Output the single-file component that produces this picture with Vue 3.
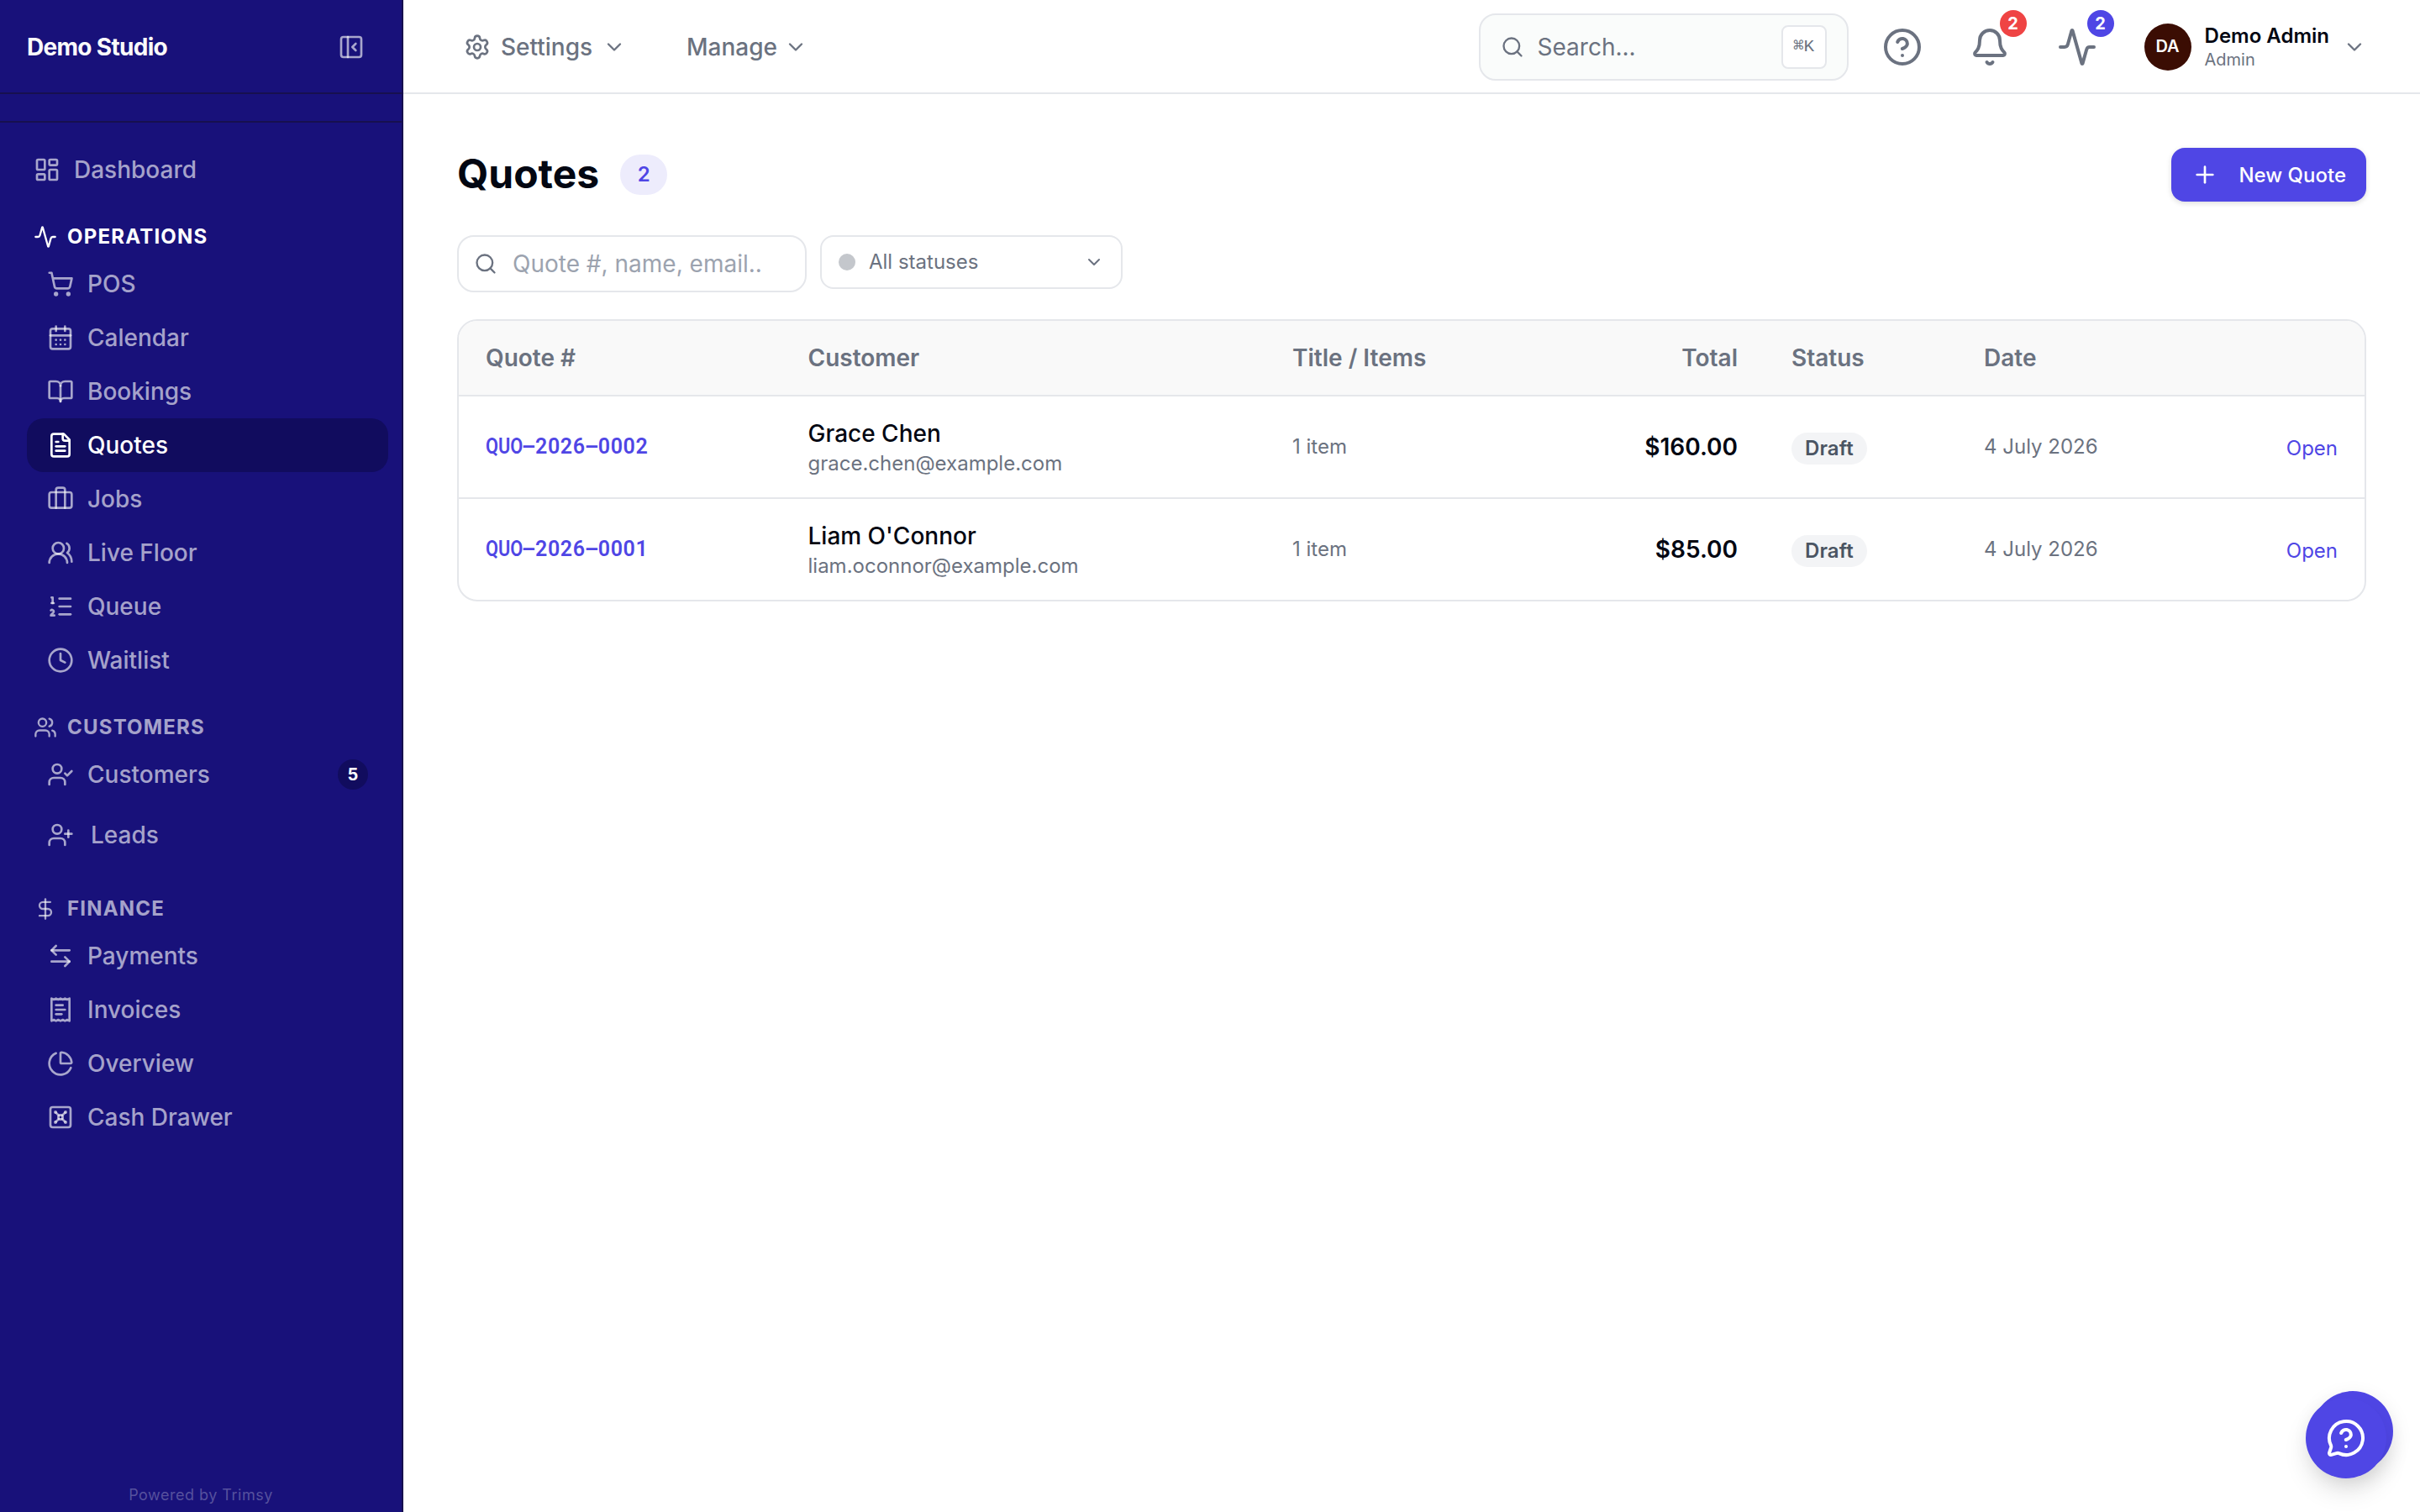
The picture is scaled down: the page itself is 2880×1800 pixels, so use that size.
<template>
    <div class="layout">
        <!-- Sidebar -->
        <aside class="sidebar">
            <div class="brand">
                <span class="brand-name">Demo Studio</span>
                <svg class="icon" viewBox="0 0 24 24" v-html="icons.panel"></svg>
            </div>
            <div class="brand-strip"></div>

            <nav class="nav">
                <a class="nav-item nav-root">
                    <svg class="icon" viewBox="0 0 24 24" v-html="icons.dashboard"></svg>
                    <span>Dashboard</span>
                </a>

                <div v-for="section in sections" :key="section.title" class="nav-section">
                    <div class="nav-heading" :class="{ current: section.current }">
                        <svg class="icon icon-sm" viewBox="0 0 24 24" v-html="icons[section.icon]"></svg>
                        <span>{{ section.title }}</span>
                    </div>
                    <a
                        v-for="item in section.items"
                        :key="item.label"
                        class="nav-item"
                        :class="{ active: item.active, spaced: item.spaced }"
                    >
                        <svg class="icon" viewBox="0 0 24 24" v-html="icons[item.icon]"></svg>
                        <span>{{ item.label }}</span>
                        <span v-if="item.count" class="nav-count">{{ item.count }}</span>
                    </a>
                </div>
            </nav>

            <div class="powered">Powered by Trimsy</div>
        </aside>

        <div class="main">
            <!-- Top bar -->
            <header class="topbar">
                <div class="menu menu-settings">
                    <svg class="icon" viewBox="0 0 24 24" v-html="icons.settings"></svg>
                    <span>Settings</span>
                    <svg class="icon icon-sm" viewBox="0 0 24 24" v-html="icons.chevron"></svg>
                </div>
                <div class="menu menu-manage">
                    <span>Manage</span>
                    <svg class="icon icon-sm" viewBox="0 0 24 24" v-html="icons.chevron"></svg>
                </div>

                <div class="global-search">
                    <svg class="icon icon-sm" viewBox="0 0 24 24" v-html="icons.search"></svg>
                    <span>Search...</span>
                    <kbd>⌘K</kbd>
                </div>

                <div class="actions">
                    <div class="action">
                        <svg class="icon icon-lg" viewBox="0 0 24 24" v-html="icons.help"></svg>
                    </div>
                    <div class="action">
                        <svg class="icon icon-lg" viewBox="0 0 24 24" v-html="icons.bell"></svg>
                        <span class="badge badge-red">2</span>
                    </div>
                    <div class="action">
                        <svg class="icon icon-lg" viewBox="0 0 24 24" v-html="icons.activity"></svg>
                        <span class="badge">2</span>
                    </div>
                </div>

                <div class="user">
                    <div class="avatar">DA</div>
                    <div class="user-text">
                        <div class="user-name">Demo Admin</div>
                        <div class="user-role">Admin</div>
                    </div>
                    <svg class="icon icon-sm" viewBox="0 0 24 24" v-html="icons.chevron"></svg>
                </div>
            </header>

            <main class="content">
                <div class="title-row">
                    <h1>Quotes</h1>
                    <span class="total-pill">{{ quotes.length }}</span>
                    <button class="new-quote">
                        <svg class="icon" viewBox="0 0 24 24" v-html="icons.plus"></svg>
                        <span>New Quote</span>
                    </button>
                </div>

                <div class="filters">
                    <div class="filter-search">
                        <svg class="icon icon-sm" viewBox="0 0 24 24" v-html="icons.search"></svg>
                        <span>Quote #, name, email..</span>
                    </div>
                    <div class="filter-status">
                        <span class="dot"></span>
                        <span>All statuses</span>
                        <svg class="icon icon-xs" viewBox="0 0 24 24" v-html="icons.chevron"></svg>
                    </div>
                </div>

                <div class="table">
                    <div class="row head">
                        <div>Quote #</div>
                        <div>Customer</div>
                        <div>Title / Items</div>
                        <div class="right">Total</div>
                        <div>Status</div>
                        <div>Date</div>
                        <div></div>
                    </div>
                    <div v-for="quote in quotes" :key="quote.customer" class="row">
                        <div class="number">
                            <span class="prefix">QUO</span><template v-for="part in quote.number" :key="part"><span class="dash">-</span><span>{{ part }}</span></template>
                        </div>
                        <div>
                            <div class="customer">{{ quote.customer }}</div>
                            <div class="email">{{ quote.email }}</div>
                        </div>
                        <div class="muted">{{ quote.items }}</div>
                        <div class="right amount">{{ quote.total }}</div>
                        <div><span class="status">{{ quote.status }}</span></div>
                        <div class="muted">{{ quote.date }}</div>
                        <div class="right"><a class="open">Open</a></div>
                    </div>
                </div>
            </main>
        </div>

        <!-- Floating help button -->
        <div class="fab-back"></div>
        <div class="fab">
            <svg class="icon icon-lg" viewBox="0 0 24 24" v-html="icons.chat"></svg>
        </div>
    </div>
</template>


<script setup>
const question = '<path d="M9.09 9a3 3 0 0 1 5.83 1c0 2-3 3-3 3"/><path d="M12 17h.01"/>';

// 24x24 stroke icons
const icons = {
    panel: '<rect width="18" height="18" x="3" y="3" rx="2"/><path d="M9 3v18"/><path d="m16 15-3-3 3-3"/>',
    dashboard: '<rect width="7" height="9" x="3" y="3" rx="1"/><rect width="7" height="5" x="14" y="3" rx="1"/><rect width="7" height="9" x="14" y="12" rx="1"/><rect width="7" height="5" x="3" y="16" rx="1"/>',
    activity: '<path d="M22 12h-2.48a2 2 0 0 0-1.93 1.46l-2.35 8.36a.25.25 0 0 1-.48 0L9.24 2.18a.25.25 0 0 0-.48 0l-2.35 8.36A2 2 0 0 1 4.49 12H2"/>',
    cart: '<circle cx="8" cy="21" r="1"/><circle cx="19" cy="21" r="1"/><path d="M2.05 2.05h2l2.66 12.42a2 2 0 0 0 2 1.58h9.78a2 2 0 0 0 1.95-1.57l1.65-7.43H5.12"/>',
    calendar: '<path d="M8 2v4"/><path d="M16 2v4"/><rect width="18" height="18" x="3" y="4" rx="2"/><path d="M3 10h18"/><path d="M8 14h.01"/><path d="M12 14h.01"/><path d="M16 14h.01"/><path d="M8 18h.01"/><path d="M12 18h.01"/><path d="M16 18h.01"/>',
    book: '<path d="M12 7v14"/><path d="M3 18a1 1 0 0 1-1-1V4a1 1 0 0 1 1-1h5a4 4 0 0 1 4 4 4 4 0 0 1 4-4h5a1 1 0 0 1 1 1v13a1 1 0 0 1-1 1h-6a3 3 0 0 0-3 3 3 3 0 0 0-3-3z"/>',
    file: '<path d="M15 2H6a2 2 0 0 0-2 2v16a2 2 0 0 0 2 2h12a2 2 0 0 0 2-2V7Z"/><path d="M14 2v4a2 2 0 0 0 2 2h4"/><path d="M10 9H8"/><path d="M16 13H8"/><path d="M16 17H8"/>',
    briefcase: '<path d="M16 20V4a2 2 0 0 0-2-2h-4a2 2 0 0 0-2 2v16"/><rect width="20" height="14" x="2" y="6" rx="2"/>',
    floor: '<path d="M18 21a8 8 0 0 0-16 0"/><circle cx="10" cy="8" r="5"/><path d="M22 20c0-3.37-2-6.5-4-8a5 5 0 0 0-.45-8.3"/>',
    list: '<path d="M11 5h10"/><path d="M11 12h10"/><path d="M11 19h10"/><path d="M4 4h1v5"/><path d="M4 9h2"/><path d="M6.5 20H3.4c0-1 2.6-1.925 2.6-3.5a1.5 1.5 0 0 0-2.6-1.02"/>',
    clock: '<circle cx="12" cy="12" r="10"/><path d="M12 6v6l4 2"/>',
    users: '<path d="M16 21v-2a4 4 0 0 0-4-4H6a4 4 0 0 0-4 4v2"/><circle cx="9" cy="7" r="4"/><path d="M22 21v-2a4 4 0 0 0-3-3.87"/><path d="M16 3.13a4 4 0 0 1 0 7.75"/>',
    userCheck: '<path d="m16 11 2 2 4-4"/><path d="M16 21v-2a4 4 0 0 0-4-4H6a4 4 0 0 0-4 4v2"/><circle cx="9" cy="7" r="4"/>',
    userPlus: '<path d="M16 21v-2a4 4 0 0 0-4-4H6a4 4 0 0 0-4 4v2"/><circle cx="9" cy="7" r="4"/><path d="M19 8v6"/><path d="M22 11h-6"/>',
    dollar: '<path d="M12 2v20"/><path d="M17 5H9.5a3.5 3.5 0 0 0 0 7h5a3.5 3.5 0 0 1 0 7H6"/>',
    arrows: '<path d="M8 3 4 7l4 4"/><path d="M4 7h16"/><path d="m16 21 4-4-4-4"/><path d="M20 17H4"/>',
    receipt: '<path d="M4 2v20l2-1 2 1 2-1 2 1 2-1 2 1 2-1 2 1V2l-2 1-2-1-2 1-2-1-2 1-2-1-2 1Z"/><path d="M14 8H8"/><path d="M16 12H8"/><path d="M13 16H8"/>',
    pie: '<path d="M21 12c.552 0 1.005-.449.95-.998a10 10 0 0 0-8.953-8.951c-.55-.055-.998.398-.998.95v8a1 1 0 0 0 1 1z"/><path d="M21.21 15.89A10 10 0 1 1 8 2.83"/>',
    vault: '<rect width="18" height="18" x="3" y="3" rx="2"/><circle cx="7.5" cy="7.5" r=".5" fill="currentColor"/><path d="m7.9 7.9 2.7 2.7"/><circle cx="16.5" cy="7.5" r=".5" fill="currentColor"/><path d="m13.4 10.6 2.7-2.7"/><circle cx="7.5" cy="16.5" r=".5" fill="currentColor"/><path d="m7.9 16.1 2.7-2.7"/><circle cx="16.5" cy="16.5" r=".5" fill="currentColor"/><path d="m13.4 13.4 2.7 2.7"/><circle cx="12" cy="12" r="2"/>',
    settings: '<path d="M9.671 4.136a2.34 2.34 0 0 1 4.659 0 2.34 2.34 0 0 0 3.319 1.915 2.34 2.34 0 0 1 2.33 4.033 2.34 2.34 0 0 0 0 3.831 2.34 2.34 0 0 1-2.33 4.033 2.34 2.34 0 0 0-3.319 1.915 2.34 2.34 0 0 1-4.659 0 2.34 2.34 0 0 0-3.32-1.915 2.34 2.34 0 0 1-2.33-4.033 2.34 2.34 0 0 0 0-3.831A2.34 2.34 0 0 1 6.35 6.051a2.34 2.34 0 0 0 3.319-1.915"/><circle cx="12" cy="12" r="3"/>',
    chevron: '<path d="m6 9 6 6 6-6"/>',
    search: '<path d="m21 21-4.34-4.34"/><circle cx="11" cy="11" r="8"/>',
    help: '<circle cx="12" cy="12" r="10"/>' + question,
    bell: '<path d="M10.268 21a2 2 0 0 0 3.464 0"/><path d="M3.262 15.326A1 1 0 0 0 4 17h16a1 1 0 0 0 .74-1.673C19.41 13.956 18 12.499 18 8A6 6 0 0 0 6 8c0 4.499-1.411 5.956-2.738 7.326"/>',
    plus: '<path d="M5 12h14"/><path d="M12 5v14"/>',
    chat: '<path d="M2.992 16.342a2 2 0 0 1 .094 1.167l-1.065 3.29a1 1 0 0 0 1.236 1.168l3.413-.998a2 2 0 0 1 1.099.092 10 10 0 1 0-4.777-4.719"/>' + question,
};

const sections = [
    {
        title: "OPERATIONS",
        icon: "activity",
        current: true,
        items: [
            { label: "POS", icon: "cart" },
            { label: "Calendar", icon: "calendar" },
            { label: "Bookings", icon: "book" },
            { label: "Quotes", icon: "file", active: true },
            { label: "Jobs", icon: "briefcase" },
            { label: "Live Floor", icon: "floor" },
            { label: "Queue", icon: "list" },
            { label: "Waitlist", icon: "clock" },
        ],
    },
    {
        title: "CUSTOMERS",
        icon: "users",
        items: [
            { label: "Customers", icon: "userCheck", count: 5 },
            { label: "Leads", icon: "userPlus", spaced: true },
        ],
    },
    {
        title: "FINANCE",
        icon: "dollar",
        items: [
            { label: "Payments", icon: "arrows" },
            { label: "Invoices", icon: "receipt" },
            { label: "Overview", icon: "pie" },
            { label: "Cash Drawer", icon: "vault" },
        ],
    },
];

const quotes = [
    {
        number: ["2026", "0002"],
        customer: "Grace Chen",
        email: "grace.chen@example.com",
        items: "1 item",
        total: "$160.00",
        status: "Draft",
        date: "4 July 2026",
    },
    {
        number: ["2026", "0001"],
        customer: "Liam O'Connor",
        email: "liam.oconnor@example.com",
        items: "1 item",
        total: "$85.00",
        status: "Draft",
        date: "4 July 2026",
    },
];
</script>


<style>
body {
    background: #ffffff;
}
</style>

<style scoped>
.layout,
.layout * {
    box-sizing: border-box;
}

.layout {
    display: flex;
    width: 2880px;
    height: 1800px;
    overflow: hidden;
    font-family: Inter, "Liberation Sans", sans-serif;
    font-size: 28px;
    line-height: 40px;
    color: #030712;
}

.icon {
    display: block;
    flex: none;
    width: 32px;
    height: 32px;
    fill: none;
    stroke: currentColor;
    stroke-width: 2;
    stroke-linecap: round;
    stroke-linejoin: round;
}

.icon-xs {
    width: 24px;
    height: 24px;
}

.icon-sm {
    width: 28px;
    height: 28px;
}

.icon-lg {
    width: 48px;
    height: 48px;
}

/* Sidebar */
.sidebar {
    display: flex;
    flex-direction: column;
    flex: none;
    width: 480px;
    background: #18117a;
    border-right: 2px solid #17104f;
    color: rgba(250, 250, 250, 0.64);
}

.brand {
    display: flex;
    align-items: center;
    justify-content: space-between;
    height: 112px;
    padding: 2px 44px 0 32px;
    border-bottom: 2px solid #17104f;
}

.brand-name {
    color: #fafafa;
    font-weight: 700;
    letter-spacing: -0.7px;
}

.brand-strip {
    height: 34px;
    border-bottom: 2px solid #17104f;
}

.nav {
    flex: 1;
    padding: 24px 16px 0 32px;
}

.nav-item {
    display: flex;
    align-items: center;
    gap: 16px;
    height: 64px;
    padding: 0 24px;
    border-radius: 20px;
    font-weight: 500;
}

.nav-root {
    padding: 0 8px;
}

.nav-item.spaced {
    height: 80px;
    gap: 20px;
}

.nav-item.active {
    background: #110c5e;
    color: #ffffff;
}

.nav-section {
    padding-top: 24px;
}

.nav-heading {
    display: flex;
    align-items: center;
    gap: 12px;
    height: 48px;
    padding: 0 8px;
    font-size: 24px;
    font-weight: 700;
    letter-spacing: 1.2px;
}

.nav-heading.current {
    color: #ffffff;
}

.nav-count {
    display: flex;
    align-items: center;
    justify-content: center;
    width: 36px;
    height: 36px;
    margin-left: auto;
    border-radius: 50%;
    background: #110c5e;
    color: #ffffff;
    font-size: 20px;
    font-weight: 700;
}

.powered {
    padding-bottom: 7px;
    font-size: 18px;
    line-height: 26px;
    letter-spacing: 0.5px;
    text-align: center;
    color: rgba(250, 250, 250, 0.28);
}

/* Top bar */
.main {
    flex: 1;
    min-width: 0;
}

.topbar {
    display: flex;
    align-items: center;
    height: 112px;
    padding: 2px 64px 0 72px;
    border-bottom: 2px solid #e5e7eb;
    color: #6b7280;
}

.menu {
    display: flex;
    align-items: center;
    font-weight: 500;
}

.menu-settings {
    gap: 12px;
    width: 265px;
}

.menu-manage {
    gap: 8px;
}

.global-search {
    display: flex;
    align-items: center;
    gap: 16px;
    width: 440px;
    height: 80px;
    margin-left: auto;
    padding: 0 24px;
    border: 2px solid #e5e7eb;
    border-radius: 20px;
    background: #fafcfb;
}

kbd {
    display: flex;
    align-items: center;
    justify-content: center;
    width: 54px;
    height: 52px;
    margin-left: auto;
    border: 2px solid #e5e7eb;
    border-radius: 8px;
    background: #ffffff;
    font-family: "Liberation Mono", "DejaVu Sans Mono", monospace;
    font-size: 21px;
}

.actions {
    display: flex;
    gap: 56px;
    margin: 0 56px 0 40px;
}

.action {
    position: relative;
}

.badge {
    position: absolute;
    top: -20px;
    right: -20px;
    width: 32px;
    height: 32px;
    border-radius: 50%;
    background: #4f46e5;
    color: #ffffff;
    font-size: 20px;
    font-weight: 700;
    line-height: 33px;
    text-align: center;
}

.badge-red {
    background: #ef4444;
}

.user {
    display: flex;
    align-items: center;
    gap: 16px;
}

.avatar {
    width: 56px;
    height: 56px;
    border-radius: 50%;
    background: #3b0d03;
    color: #ffffff;
    font-size: 20px;
    font-weight: 600;
    line-height: 54px;
    text-align: center;
}

.user-text {
    padding-top: 2px;
}

.user-name {
    color: #030712;
    font-size: 24px;
    font-weight: 600;
    line-height: 28px;
}

.user-role {
    font-size: 20px;
    line-height: 28px;
}

/* Page */
.content {
    padding: 64px;
}

.title-row {
    display: flex;
    align-items: center;
    height: 64px;
}

h1 {
    margin: 0;
    padding-bottom: 2px;
    font-size: 48px;
    font-weight: 700;
    line-height: 62px;
}

.total-pill {
    width: 56px;
    height: 48px;
    margin-left: 25px;
    border-radius: 24px;
    background: #edecfc;
    color: #4f46e5;
    font-size: 24px;
    font-weight: 600;
    line-height: 48px;
    text-align: center;
}

.new-quote {
    display: flex;
    align-items: center;
    justify-content: space-between;
    width: 232px;
    height: 64px;
    margin-left: auto;
    padding: 0 24px;
    border: 0;
    border-radius: 16px;
    background: #4f46e5;
    box-shadow: 0 2px 6px rgba(0, 0, 0, 0.14);
    color: #ffffff;
    font-family: inherit;
    font-size: 24px;
    font-weight: 500;
}

.filters {
    display: flex;
    align-items: flex-start;
    gap: 16px;
    margin-top: 40px;
    color: #6b7280;
}

.filter-search {
    display: flex;
    align-items: center;
    gap: 18px;
    width: 416px;
    height: 68px;
    padding: 0 18px;
    border: 2px solid #e5e7eb;
    border-radius: 20px;
}

.filter-search span {
    color: #9ca3af;
}

.filter-status {
    display: flex;
    align-items: center;
    gap: 16px;
    width: 360px;
    height: 64px;
    padding: 0 20px;
    border: 2px solid #e5e7eb;
    border-radius: 16px;
    font-size: 24px;
}

.filter-status .icon {
    margin-left: auto;
}

.dot {
    width: 20px;
    height: 20px;
    border-radius: 50%;
    background: #c4c7cc;
}

/* Quotes table */
.table {
    margin-top: 32px;
    border: 2px solid #e5e7eb;
    border-radius: 24px;
    overflow: hidden;
}

.row {
    display: grid;
    grid-template-columns: 383.5px 576.5px 394px 200px 229px 300px 1fr;
    align-items: center;
    height: 122px;
    border-bottom: 2px solid #e5e7eb;
}

.row:last-child {
    height: 120px;
    border-bottom: 0;
}

.row > div {
    padding: 0 32px;
    white-space: nowrap;
}

.head {
    height: 90px;
    background: #f9f9f9;
    color: #6b7280;
    font-weight: 600;
}

.right {
    text-align: right;
}

.number {
    color: #4f46e5;
    font-family: Roboto, sans-serif;
    font-size: 25px;
    font-weight: 600;
    letter-spacing: 0.65px;
}

/* Letters and dashes are squeezed or stretched to the digit pitch */
.number .prefix {
    display: inline-block;
    width: 44px;
    letter-spacing: 0;
    transform: scaleX(0.87);
    transform-origin: left;
}

.number .dash {
    display: inline-block;
    width: 15px;
    letter-spacing: 0;
    text-align: center;
    transform: scaleX(2);
}

.customer {
    padding-top: 2px;
    font-weight: 500;
    line-height: 38px;
}

.email {
    color: #6b7280;
    font-size: 24px;
    line-height: 34px;
}

.muted {
    color: #6b7280;
    font-size: 24px;
}

.amount {
    font-weight: 600;
}

.status {
    display: inline-block;
    height: 38px;
    padding: 0 16px;
    border-radius: 19px;
    background: #f3f4f6;
    color: #4b5563;
    font-size: 24px;
    font-weight: 600;
    line-height: 38px;
    letter-spacing: 0.1px;
    vertical-align: middle;
}

.open {
    display: block;
    padding-top: 3px;
    color: #4f46e5;
    font-size: 24px;
}

/* Help button floats over the page, with a second disc peeking out behind */
.fab,
.fab-back {
    position: absolute;
    width: 96px;
    height: 96px;
    border-radius: 50%;
    background: #4f46e5;
}

.fab-back {
    top: 1656px;
    left: 2752px;
    box-shadow: 0 8px 24px rgba(0, 0, 0, 0.1);
}

.fab {
    display: flex;
    align-items: center;
    justify-content: center;
    top: 1664px;
    left: 2744px;
    width: 96px;
    box-shadow: 0 16px 32px -4px rgba(0, 0, 0, 0.14);
    color: #ffffff;
}
</style>
